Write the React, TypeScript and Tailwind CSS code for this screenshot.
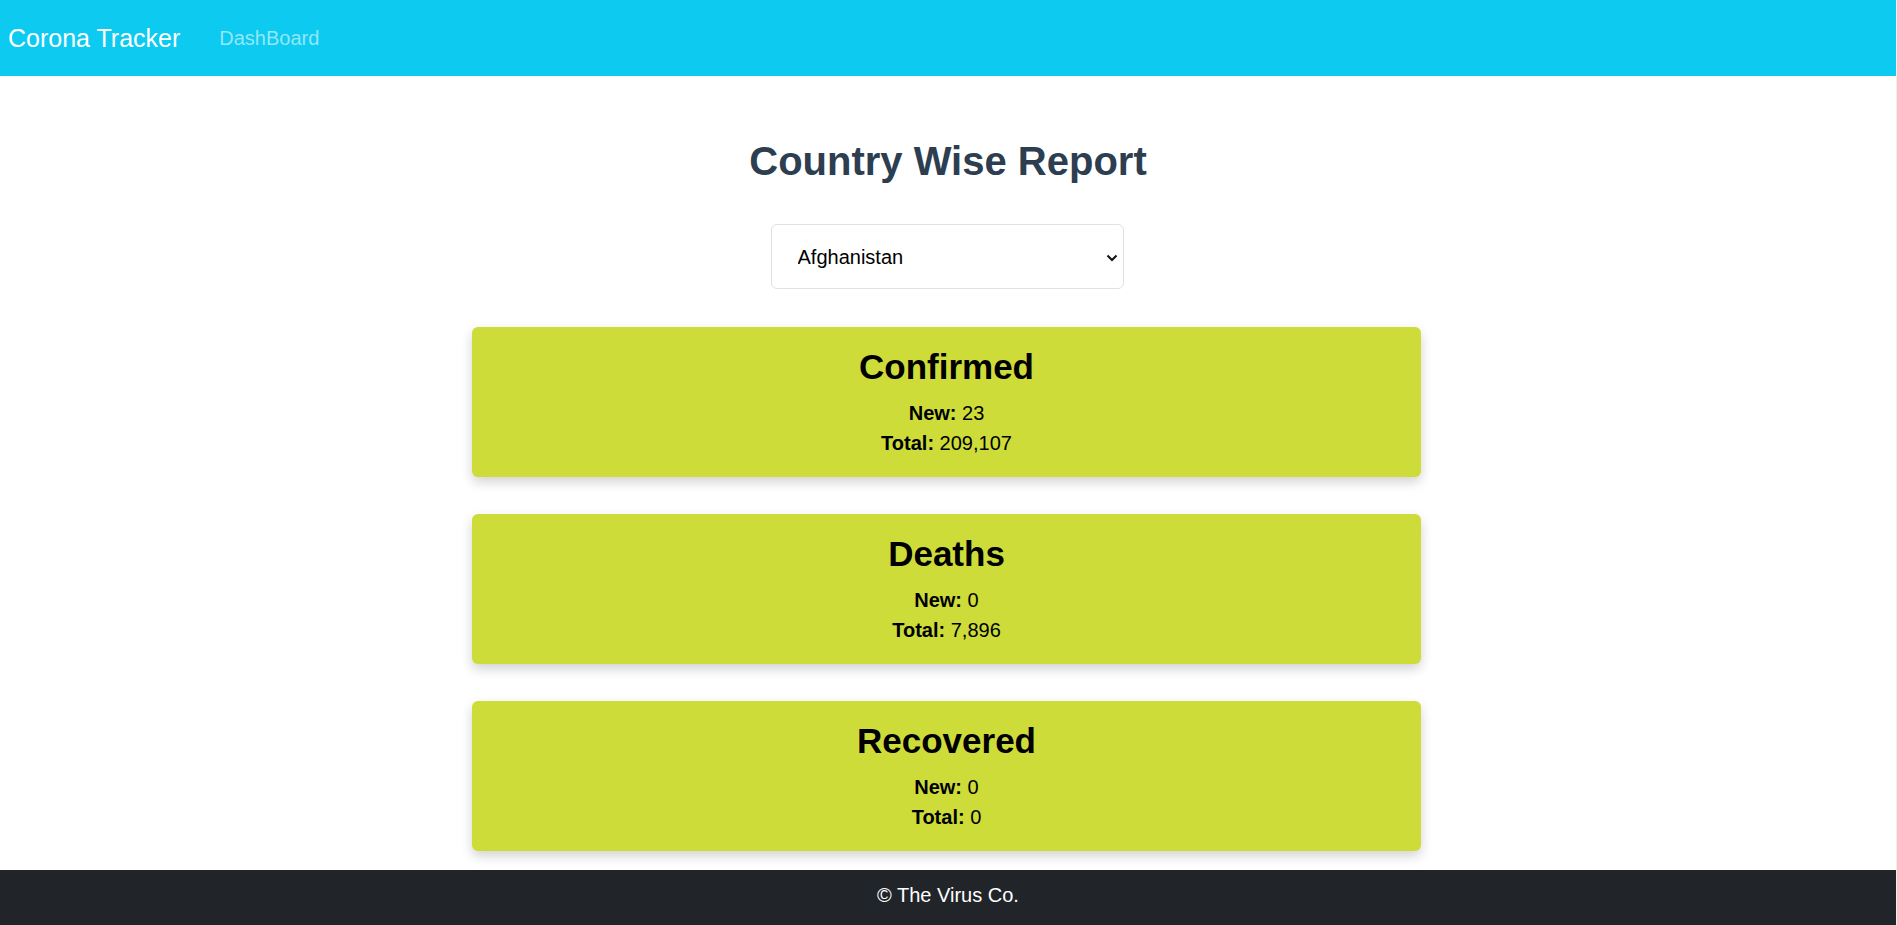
import React from "react";

type Stat = { title: string; newVal: string; total: string };

const stats: Stat[] = [
  { title: "Confirmed", newVal: "23", total: "209,107" },
  { title: "Deaths", newVal: "0", total: "7,896" },
  { title: "Recovered", newVal: "0", total: "0" },
];

function Card({ s }: { s: Stat }) {
  return (
    <div className="w-[949px] h-[150px] rounded-md bg-[#cddc39] shadow-[0_5px_12px_rgba(0,0,0,0.18)] pt-[19px] text-center text-black">
      <h2 className="text-[35px] leading-[42px] font-bold">{s.title}</h2>
      <div className="mt-[10px] text-[20px] leading-[30px]">
        <div>
          <span className="font-bold">New:</span> {s.newVal}
        </div>
        <div>
          <span className="font-bold">Total:</span> {s.total}
        </div>
      </div>
    </div>
  );
}

export default function App() {
  return (
    <div className="min-h-screen flex flex-col bg-white border-r border-[#ededed] font-['Liberation_Sans',Arial,sans-serif]">
      <nav className="h-[76px] bg-[#0dcaf0] flex items-center pl-[8px]">
        <span className="text-[25px] leading-[30px] text-white">Corona Tracker</span>
        <a className="ml-[39px] text-[20px] leading-[30px] text-[#92e7f8]">DashBoard</a>
      </nav>
      <main className="flex-1 flex flex-col items-center pt-[61px]">
        <h1 className="text-[40px] leading-[48px] font-bold text-[#2c3e50]">Country Wise Report</h1>
        <div className="relative mt-[39px] w-[353px] h-[65px] -translate-x-[1px]">
          <select className="w-full h-full appearance-none rounded-md border border-[#dee2e6] bg-white pl-[26px] text-[20px] text-black outline-none">
            <option>Afghanistan</option>
          </select>
          <svg
            className="pointer-events-none absolute right-[6px] top-[30px]"
            width="12"
            height="8"
            viewBox="0 0 12 8"
            fill="none"
          >
            <path d="M1.5 1.5 L6 6 L10.5 1.5" stroke="#111" strokeWidth="2" />
          </svg>
        </div>
        <div className="mt-[38px] w-[952px] pr-[3px] flex flex-col gap-[37px]">
          {stats.map((s) => (
            <Card key={s.title} s={s} />
          ))}
        </div>
      </main>
      <footer className="mt-[19px] h-[55px] bg-[#212529] text-center text-white text-[20px] leading-[30px] pt-[10px]">
        © The Virus Co.
      </footer>
    </div>
  );
}
